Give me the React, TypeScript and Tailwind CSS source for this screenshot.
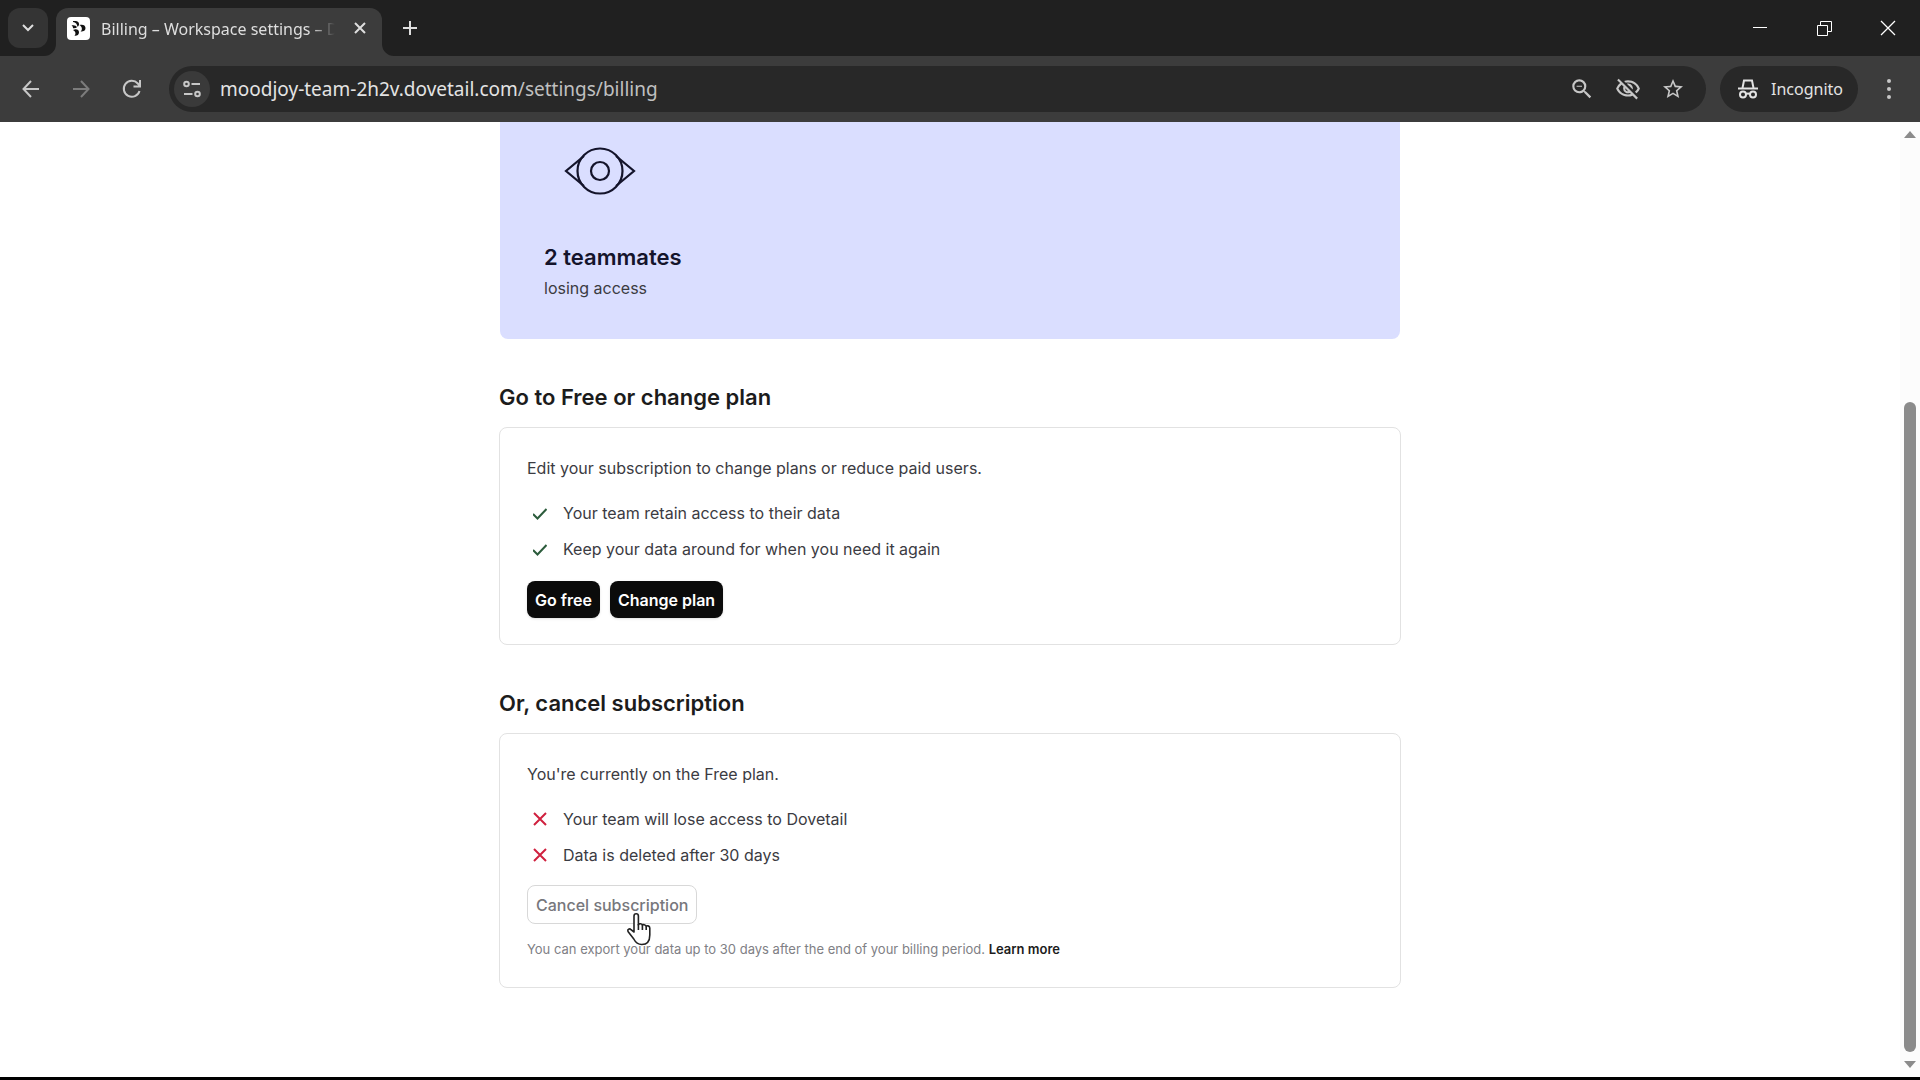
import type { ReactNode } from "react"
import { MdOutlineVisibilityOff, MdOutlineZoomOut, MdStarBorder } from "react-icons/md"

const retained = ["Your team retain access to their data", "Keep your data around for when you need it again"]

const lost = ["Your team will lose access to Dovetail", "Data is deleted after 30 days"]

function TabStrip() {
  return (
    <div className="flex h-14 items-stretch bg-[#202020]">
      <button
        aria-label="Search tabs"
        className="mt-2 ml-2 flex h-10 w-10 items-center justify-center rounded-xl bg-[#343434] text-[#dedede]"
      >
        <svg width="12" height="8" viewBox="0 0 12 8" fill="none" stroke="currentColor" strokeWidth="2">
          <path d="M1 1l5 5 5-5" />
        </svg>
      </button>

      <div className="relative mt-2 ml-2 flex w-[326px] items-center rounded-t-xl bg-[#3c3c3c] pb-2 pl-[11px]">
        <svg className="absolute bottom-0 -left-3" width="12" height="12" viewBox="0 0 12 12" fill="#3c3c3c">
          <path d="M12 0v12H0A12 12 0 0 0 12 0z" />
        </svg>
        <svg className="absolute -right-3 bottom-0" width="12" height="12" viewBox="0 0 12 12" fill="#3c3c3c">
          <path d="M0 0v12h12A12 12 0 0 1 0 0z" />
        </svg>
        <DovetailLogo />
        <span className="ml-[11px] w-[234px] overflow-hidden mask-r-from-90% mask-r-to-100% pt-px text-[16px] whitespace-nowrap text-[#dedede]">
          Billing – Workspace settings – Dovetail
        </span>
        <button aria-label="Close tab" className="ml-[19px] text-[#dedede]">
          <svg width="12" height="12" viewBox="0 0 12 12" fill="none" stroke="currentColor" strokeWidth="2">
            <path d="M1 1l10 10M11 1L1 11" />
          </svg>
        </button>
      </div>

      <button aria-label="New tab" className="ml-5 text-[#dedede]">
        <svg width="16" height="16" viewBox="0 0 16 16" fill="none" stroke="currentColor" strokeWidth="2">
          <path d="M8 1v14M1 8h14" />
        </svg>
      </button>

      <div className="ml-auto flex text-white">
        <button aria-label="Minimize" className="flex w-16 items-center justify-center">
          <svg width="14" height="14" viewBox="0 0 14 14" stroke="currentColor" strokeWidth="1">
            <path d="M0 6.5h14" />
          </svg>
        </button>
        <button aria-label="Restore" className="flex w-16 items-center justify-center">
          <svg width="15" height="15" viewBox="0 0 15 15" fill="none" stroke="currentColor" strokeWidth="1">
            <path d="M.5 4.5h10v10H.5zM3.5 4V.5h11v10H11" />
          </svg>
        </button>
        <button aria-label="Close" className="flex w-16 items-center justify-center">
          <svg width="16" height="16" viewBox="0 0 16 16" stroke="currentColor" strokeWidth="1.3">
            <path d="M1 1l14 14M15 1L1 15" />
          </svg>
        </button>
      </div>
    </div>
  )
}

function DovetailLogo() {
  return (
    <svg className="shrink-0" width="23" height="23" viewBox="0 0 23 23">
      <rect width="23" height="23" rx="4" fill="#fff" />
      <g fill="#111">
        <path d="M6 4h2.500a3.200 3.200 0 0 1 3 5L10.500 9.800C10 7 9 5.500 6 5z" />
        <path d="M4.500 8.500c2.500-.6 5 .2 5.500 1.800-1 .9-2.500 1.200-4 .9C6 10 5.500 9 4.500 8.500z" />
        <path d="M12.500 8c3-1 6 0 6 3s-2.500 3.800-5 3.500c2-1.300 2-4.500-1-6.500z" />
        <path d="M6 13c3-1.500 6-.5 6 2.200s-2 3.800-4.500 3.500c1.800-1.700 1.200-4.200-1.500-5.700z" />
      </g>
    </svg>
  )
}

function Toolbar() {
  return (
    <div className="flex h-[66px] items-center bg-[#3c3c3c] text-[#c7c7c7]">
      <button aria-label="Back" className="ml-[22px]">
        <svg width="18" height="18" viewBox="0 0 18 18" fill="none" stroke="currentColor" strokeWidth="2">
          <path d="M17 9H2M9 1L1.500 9 9 17" />
        </svg>
      </button>
      <button aria-label="Forward" disabled className="ml-8 text-[#7c7c7c]">
        <svg width="18" height="18" viewBox="0 0 18 18" fill="none" stroke="currentColor" strokeWidth="2">
          <path d="M1 9h15M9 1l7.500 8L9 17" />
        </svg>
      </button>
      <button aria-label="Reload" className="ml-8">
        <svg width="20" height="20" viewBox="0 0 20 20" fill="none" stroke="currentColor" strokeWidth="2">
          <path d="M17.500 12A8 8 0 1 1 15.800 4.500L18 7M18 1v6.500h-6.500" />
        </svg>
      </button>

      <div className="ml-[27px] flex h-[46px] flex-1 items-center rounded-full bg-[#282828] pr-[21px] pl-[5px]">
        <button
          aria-label="View site information"
          className="flex h-9 w-9 items-center justify-center rounded-full bg-[#3a3a3a]"
        >
          <svg width="18" height="18" viewBox="0 0 18 18" fill="none" stroke="currentColor" strokeWidth="2">
            <circle cx="3.500" cy="4" r="2.300" />
            <circle cx="14.500" cy="14" r="2.300" />
            <path d="M8.500 4H17M1 14h8.500" />
          </svg>
        </button>
        <div className="ml-[10px] flex-1 text-[19px] text-[#e3e3e3]">
          moodjoy-team-2h2v.dovetail.com<span className="text-[#c0c0c0]">/settings/billing</span>
        </div>
        <div className="flex items-center gap-5">
          <button aria-label="Zoom">
            <MdOutlineZoomOut size={26} />
          </button>
          <button aria-label="Third-party cookies blocked">
            <MdOutlineVisibilityOff size={26} />
          </button>
          <button aria-label="Bookmark this tab">
            <MdStarBorder size={24} />
          </button>
        </div>
      </div>

      <div className="ml-[14px] flex h-[46px] w-[138px] items-center rounded-full bg-[#282828] pl-[17px] text-[16px] text-[#e3e3e3]">
        <svg className="mr-3" width="22" height="20" viewBox="0 0 22 20" fill="none" stroke="currentColor" strokeWidth="2">
          <path d="M1 9.500h20" />
          <path d="M5.500 9L7 1.500h8L16.500 9" />
          <circle cx="6" cy="15.500" r="3" />
          <circle cx="16" cy="15.500" r="3" />
          <path d="M9 15q2-1 4 0" />
        </svg>
        Incognito
      </div>
      <button aria-label="Menu" className="mr-7 ml-7">
        <svg width="6" height="22" viewBox="0 0 6 22" fill="currentColor">
          <circle cx="3" cy="3" r="2" />
          <circle cx="3" cy="11" r="2" />
          <circle cx="3" cy="19" r="2" />
        </svg>
      </button>
    </div>
  )
}

function Panel({ title, children }: { title: string; children: ReactNode }) {
  return (
    <section className="mt-[42px]">
      <h2 className="text-[22px] leading-8 font-semibold text-[#1c1c1c]">{title}</h2>
      <div className="mt-[14px] rounded-lg border border-[#e2e2e2] px-[27px] pt-7 pb-[26px]">{children}</div>
    </section>
  )
}

function List({ items, icon }: { items: string[]; icon: ReactNode }) {
  return (
    <ul className="mt-[17px] space-y-1">
      {items.map((item) => (
        <li key={item} className="flex h-8 items-center gap-4 pl-[6px]">
          {icon}
          {item}
        </li>
      ))}
    </ul>
  )
}

const check = (
  <svg width="14" height="14" viewBox="0 0 14 14" fill="none" stroke="#2c5c3c" strokeWidth="2">
    <path d="M0 8l4.500 4.500L13.500 3" />
  </svg>
)

const cross = (
  <svg width="14" height="14" viewBox="0 0 14 14" fill="none" stroke="#d0213f" strokeWidth="2">
    <path d="M1 1l12 12M13 1L1 13" />
  </svg>
)

// Hand pointer shown while hovering the cancel button
function Pointer() {
  return (
    <svg
      className="pointer-events-none absolute top-[27px] left-[99px]"
      width="26"
      height="34"
      viewBox="0 0 26 34"
      fill="#fff"
      stroke="#222"
      strokeWidth="1.600"
      strokeLinejoin="round"
    >
      <path d="M8 20V4a2.200 2.200 0 0 1 4.400 0v9c0-2 4-1.600 4 .600 0-1.600 3.800-1.200 3.800 1 .200-1.400 3.600-1 3.600 1.400v7c0 6-3 9.500-8 9.500-4.500 0-6.500-2.500-8-5.500L2 19.500c-1-2.200 1.600-3.400 3-1.800z" />
      <path d="M12.400 12v6M16.400 13.500V18M20.200 14.500V18" />
    </svg>
  )
}

export default function App() {
  return (
    <div className="flex h-screen flex-col overflow-hidden border-b-[3px] border-black bg-white">
      <header className="shrink-0 font-['Noto_Sans',sans-serif]">
        <TabStrip />
        <Toolbar />
      </header>

      <div className="flex min-h-0 flex-1">
        <main className="flex-1 overflow-hidden font-['Inter',sans-serif] text-[16px] leading-6 text-[#3b3b42]">
          <div className="mx-auto max-w-[902px]">
            <section className="mx-px rounded-b-lg bg-[#dadeff] px-11 pt-[25px] pb-[39px]">
              <svg className="ml-5" width="72" height="48" viewBox="0 0 72 48" fill="none" stroke="#14142b" strokeWidth="2.200">
                <circle cx="36" cy="24" r="22.500" />
                <circle cx="36" cy="24" r="9" />
                <path d="M20 9L2 24l18 15M52 9l18 15-18 15" />
              </svg>
              <h2 className="mt-[46px] text-[22px] leading-8 font-semibold text-[#14142b]">2 teammates</h2>
              <p className="mt-[3px]">losing access</p>
            </section>

            <Panel title="Go to Free or change plan">
              <p>Edit your subscription to change plans or reduce paid users.</p>
              <List items={retained} icon={check} />
              <div className="mt-4 flex gap-[10px] font-semibold text-white">
                <button className="h-[37px] rounded-lg bg-[#0b0b0b] px-2 shadow-sm">Go free</button>
                <button className="h-[37px] rounded-lg bg-[#0b0b0b] px-2 shadow-sm">Change plan</button>
              </div>
            </Panel>

            <Panel title="Or, cancel subscription">
              <p>You're currently on the Free plan.</p>
              <List items={lost} icon={cross} />
              <div className="relative mt-[14px] flex">
                <button className="h-[39px] rounded-lg border border-[#d8d8d8] px-2 font-medium text-[#77777c]">
                  Cancel subscription
                </button>
                <Pointer />
              </div>
              <p className="mt-[13px] text-[13px] text-[#808085]">
                You can export your data up to 30 days after the end of your billing period.{" "}
                <a href="#learn-more" className="font-semibold text-[#1c1c1c]">
                  Learn more
                </a>
              </p>
            </Panel>
          </div>
        </main>

        <div className="flex w-5 flex-col items-center justify-between bg-[#fcfcfc] py-[9px]">
          <svg width="12" height="7" viewBox="0 0 12 7" fill="#8b8b8b">
            <path d="M6 0l6 7H0z" />
          </svg>
          <div className="mt-auto mb-[9px] h-[69.4%] w-3 rounded-full bg-[#8b8b8b]" />
          <svg width="12" height="7" viewBox="0 0 12 7" fill="#8b8b8b">
            <path d="M0 0h12L6 7z" />
          </svg>
        </div>
      </div>
    </div>
  )
}
